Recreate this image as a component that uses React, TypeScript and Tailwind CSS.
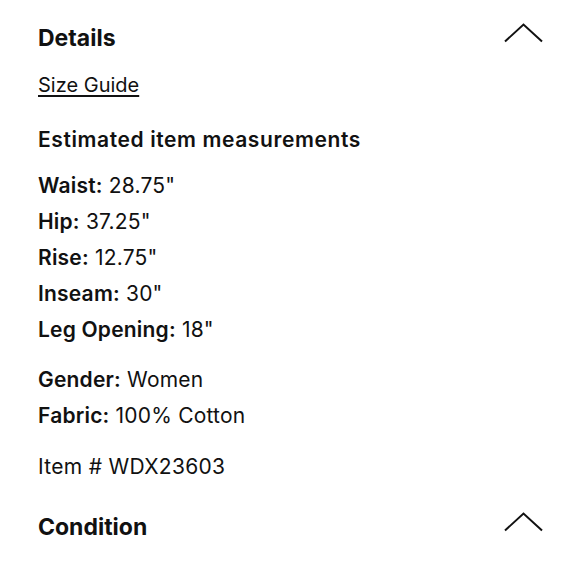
import React from "react";

function Chevron() {
    return (
        <svg width="39" height="20" viewBox="0 0 39 20" className="mt-[3px]">
            <path d="M1 18.5 L19.5 1.5 L38 18.5" fill="none" stroke="#111" strokeWidth="2" />
        </svg>
    );
}

const measurements = [
    ["Waist:", '28.75"'],
    ["Hip:", '37.25"'],
    ["Rise:", '12.75"'],
    ["Inseam:", '30"'],
    ["Leg Opening:", '18"'],
];

function Row({ label, value }: { label: string; value: string }) {
    return (
        <p className="text-[21px] leading-[36px] tracking-[0.2px]">
            <span className="font-semibold">{label}</span> {value}
        </p>
    );
}

export default function App() {
    return (
        <div
            className="min-h-[580px] w-[580px] bg-white pl-[38px] pr-[37px] pt-[20px] text-[#111]"
            style={{ fontFamily: "Inter, 'Noto Sans', sans-serif" }}
        >
            <div className="flex items-start justify-between">
                <h2 className="text-[23px] font-bold leading-[36px]">Details</h2>
                <Chevron />
            </div>

            <a className="mt-[11px] block text-[20px] leading-[36px] underline underline-offset-[3px]">
                Size Guide
            </a>

            <h3 className="mt-[19px] text-[21px] font-semibold leading-[36px] tracking-[0.6px]">
                Estimated item measurements
            </h3>

            <div className="mt-[10px]">
                {measurements.map(([label, value]) => (
                    <Row key={label} label={label} value={value} />
                ))}
            </div>

            <div className="mt-[14px]">
                <Row label="Gender:" value="Women" />
                <Row label="Fabric:" value="100% Cotton" />
            </div>

            <p className="mt-[15px] text-[21px] leading-[36px] tracking-[0.3px]">Item # WDX23603</p>

            <div className="mt-[24px] flex items-start justify-between">
                <h2 className="text-[23px] font-bold leading-[36px]">Condition</h2>
                <Chevron />
            </div>
        </div>
    );
}
